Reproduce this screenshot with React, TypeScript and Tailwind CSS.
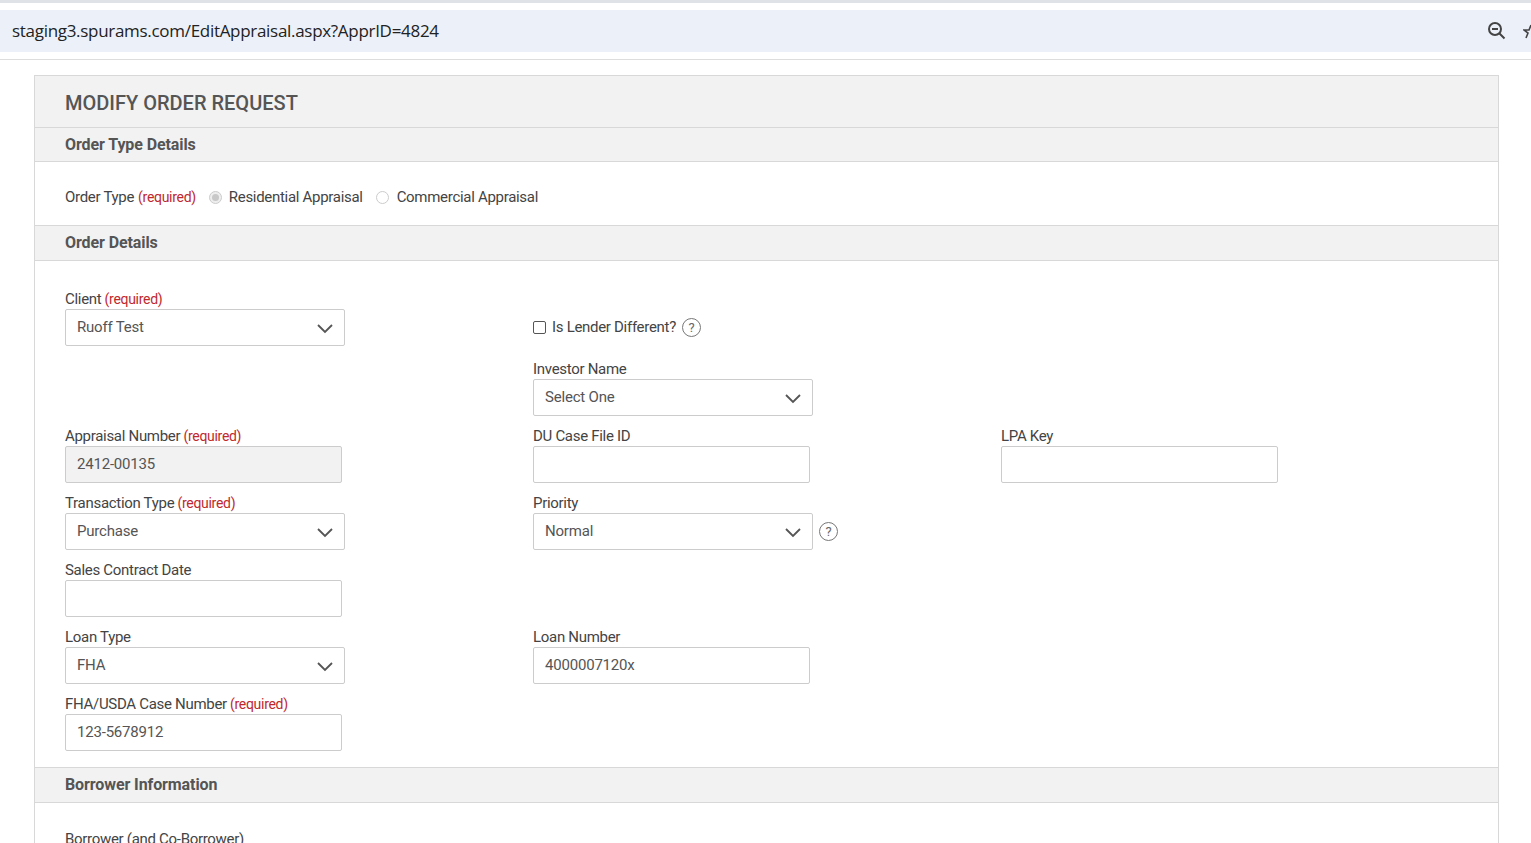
import React from "react";

const font = { fontFamily: "Roboto, 'Liberation Sans', sans-serif" };

function Chevron() {
  return (
    <svg width="18" height="18" viewBox="0 0 18 18" className="absolute right-[10px] top-1/2 -translate-y-1/2">
      <path d="M2 6l7 7 7-7" fill="none" stroke="#555" strokeWidth="1.8" />
    </svg>
  );
}

function Help() {
  return (
    <span className="inline-flex w-[19px] h-[19px] rounded-full border border-[#777] text-[#666] text-[13px] items-center justify-center leading-none">?</span>
  );
}

function Label({ t, req }: { t: string; req?: boolean }) {
  return (
    <div className="h-[20px] text-[15px] text-[#444] leading-[20px] tracking-[-0.3px]">
      {t}
      {req && <span className="text-[#c0282d] text-[14px]"> (required)</span>}
    </div>
  );
}

function Select({ v }: { v: string }) {
  return (
    <div className="relative w-[280px] h-[37px] border border-[#ccc] rounded-[2px] bg-white flex items-center px-[11px] text-[15px] text-[#555] tracking-[-0.2px]">
      {v}
      <Chevron />
    </div>
  );
}

function Input({ v, grey }: { v?: string; grey?: boolean }) {
  return (
    <div className={`w-[277px] h-[37px] border border-[#ccc] rounded-[2px] flex items-center px-[11px] text-[15px] text-[#555] tracking-[-0.2px] ${grey ? "bg-[#f2f2f2]" : "bg-white"}`}>
      {v}
    </div>
  );
}

function Section({ t, h = 35 }: { t: string; h?: number }) {
  return (
    <div className="bg-[#f2f2f2] border-y border-[#d8d8d8] px-[30px] flex items-center text-[16px] font-bold text-[#555] tracking-[-0.1px]" style={{ height: h }}>
      {t}
    </div>
  );
}

export default function App() {
  return (
    <div className="w-[1531px] h-[843px] overflow-hidden bg-white" style={font}>
      <div className="h-[10px] bg-white border-t-[3px] border-[#dfe3e8]" />
      <div className="h-[42px] bg-[#ecf1f9] flex items-center justify-between pl-[12px] pr-0">
        <span className="text-[17px] text-[#222] tracking-[-0.3px]" style={{ fontFamily: "'Open Sans', 'Liberation Sans', sans-serif" }}>staging3.spurams.com/EditAppraisal.aspx?ApprID=4824</span>
        <div className="flex items-center gap-[16px]">
          <svg width="20" height="20" viewBox="0 0 20 20">
            <circle cx="8" cy="8" r="6" fill="none" stroke="#444" strokeWidth="2" />
            <path d="M5 8h6M12.5 12.5l5 5" stroke="#444" strokeWidth="2" />
          </svg>
          <svg width="8" height="16" viewBox="0 0 8 16"><path d="M8 2L6 7H1l4 3-2 5" fill="none" stroke="#444" strokeWidth="1.6" /></svg>
        </div>
      </div>
      <div className="h-[8px] border-b border-[#ddd]" />
      <div className="ml-[34px] mt-[15px] w-[1465px] border-x border-t border-[#d8d8d8]">
        <div className="h-[51px] bg-[#f2f2f2] px-[30px] flex items-center text-[20px] font-medium text-[#555] pt-[2px]">MODIFY ORDER REQUEST</div>
        <Section t="Order Type Details" />
        <div className="h-[63px] px-[30px] flex items-center text-[15px] text-[#444] pt-[7px] tracking-[-0.3px]">
          Order Type<span className="text-[#c0282d] text-[14px] ml-[4px]">(required)</span>
          <span className="ml-[13px] w-[13px] h-[13px] rounded-full border border-[#ccc] bg-[#eee] flex items-center justify-center"><span className="w-[7px] h-[7px] rounded-full bg-[#c8c8c8]" /></span>
          <span className="ml-[7px]">Residential Appraisal</span>
          <span className="ml-[13px] w-[13px] h-[13px] rounded-full border border-[#ccc] bg-white" />
          <span className="ml-[8px]">Commercial Appraisal</span>
        </div>
        <Section t="Order Details" h={36} />
        <div className="px-[30px] pt-[28px] pb-[16px] flex flex-col gap-[10px]">
          <div className="grid grid-cols-[468px_468px_1fr]">
            <div>
              <Label t="Client" req />
              <Select v="Ruoff Test" />
            </div>
            <div className="flex flex-col">
              <div className="h-[20px]" />
              <div className="h-[37px] flex items-center gap-[6px] text-[15px] text-[#444] tracking-[-0.3px]">
                <span className="w-[13px] h-[13px] border border-[#555] rounded-[2px]" />
                Is Lender Different? <Help />
              </div>
              <div className="h-[13px]" />
              <Label t="Investor Name" />
              <Select v="Select One" />
            </div>
          </div>
          <div className="grid grid-cols-[468px_468px_1fr]">
            <div><Label t="Appraisal Number" req /><Input v="2412-00135" grey /></div>
            <div><Label t="DU Case File ID" /><Input /></div>
            <div><Label t="LPA Key" /><Input /></div>
          </div>
          <div className="grid grid-cols-[468px_468px_1fr]">
            <div><Label t="Transaction Type" req /><Select v="Purchase" /></div>
            <div>
              <Label t="Priority" />
              <div className="flex items-center gap-[6px]"><Select v="Normal" /><Help /></div>
            </div>
          </div>
          <div><Label t="Sales Contract Date" /><Input /></div>
          <div className="grid grid-cols-[468px_468px_1fr]">
            <div><Label t="Loan Type" /><Select v="FHA" /></div>
            <div><Label t="Loan Number" /><Input v="4000007120x" /></div>
          </div>
          <div><Label t="FHA/USDA Case Number" req /><Input v="123-5678912" /></div>
        </div>
        <Section t="Borrower Information" h={36} />
        <div className="px-[30px] pt-[26px]"><Label t="Borrower (and Co-Borrower)" /></div>
      </div>
    </div>
  );
}
